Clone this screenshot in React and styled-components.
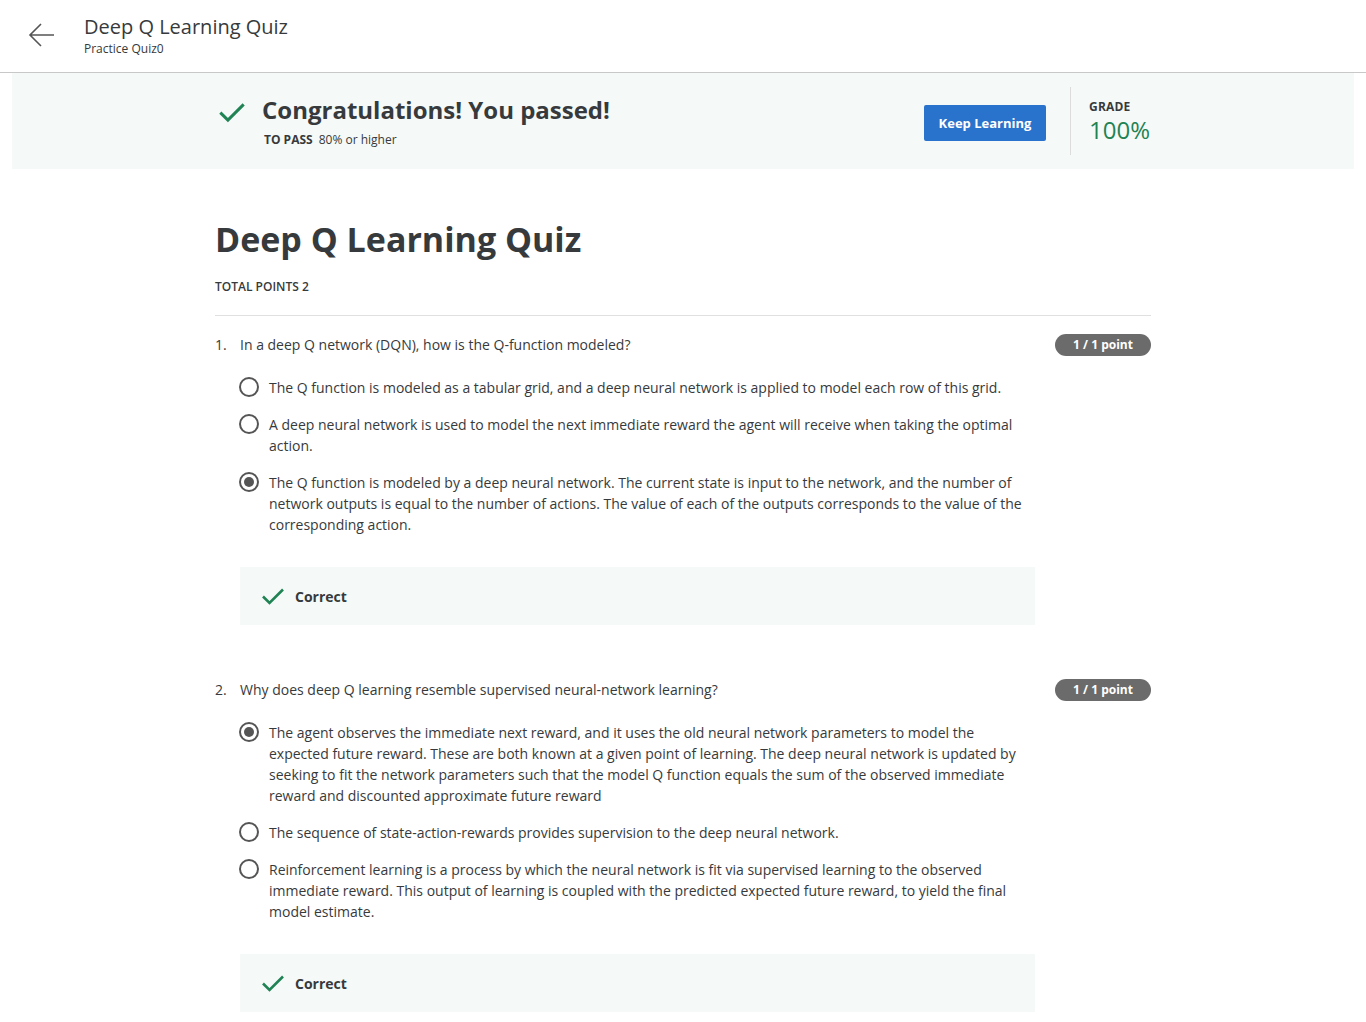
import React from 'react';
import styled, { createGlobalStyle } from 'styled-components';

const GlobalStyle = createGlobalStyle`
  body {
    margin: 0;
    background: #fff;
    font-family: "Open Sans", "Liberation Sans", sans-serif;
    color: #373a3c;
  }
`;

const Header = styled.header`
  height: 73px;
  border-bottom: 1px solid #c8c8c8;
  display: flex;
  align-items: center;
  box-sizing: border-box;
  padding-left: 28px;
`;

const BackButton = styled.button`
  border: none;
  background: none;
  padding: 0;
  width: 28px;
  height: 28px;
  display: flex;
  align-items: center;
  justify-content: center;
  margin-right: 28px;
  margin-top: -2px;
  cursor: pointer;
`;

const HeaderTitles = styled.div`
  display: flex;
  flex-direction: column;
  margin-top: -4px;
`;

const HeaderTitle = styled.h1`
  margin: 0;
  font-size: 20px;
  font-weight: 400;
  line-height: 28px;
  color: #373a3c;
`;

const HeaderSub = styled.span`
  font-size: 12px;
  line-height: 14px;
  margin-top: 1px;
  color: #373a3c;
`;

const Banner = styled.section`
  margin: 0 12px;
  background: #f5f9f8;
  height: 96px;
  display: flex;
  justify-content: center;
`;

const BannerInner = styled.div`
  width: 936px;
  display: flex;
  align-items: center;
  padding-top: 3px;
  box-sizing: border-box;
`;

const PassBlock = styled.div`
  flex: 1;
  display: flex;
  align-items: flex-start;
  gap: 16px;
  padding-left: 3px;
  margin-top: -2px;
`;

const CheckWrap = styled.div`
  margin-top: 4px;
`;

const PassTexts = styled.div`
  display: flex;
  flex-direction: column;
`;

const PassTitle = styled.h2`
  margin: 0;
  font-size: 24px;
  font-weight: 700;
  line-height: 32px;
  color: #373a3c;
`;

const PassMeta = styled.div`
  font-size: 12px;
  line-height: 18px;
  margin-top: 5px;
  padding-left: 2px;
  b {
    font-weight: 700;
    margin-right: 6px;
  }
`;

const KeepButton = styled.button`
  width: 122px;
  height: 36px;
  border: none;
  border-radius: 2px;
  background: #2a73cc;
  color: #fff;
  font-family: inherit;
  font-size: 13px;
  font-weight: 700;
  cursor: pointer;
`;

const Divider = styled.div`
  width: 1px;
  height: 68px;
  background: #dcdcdc;
  margin: -3px 18px 0 24px;
`;

const Grade = styled.div`
  width: 62px;
  display: flex;
  flex-direction: column;
  margin-top: -2px;
`;

const GradeLabel = styled.span`
  font-size: 12px;
  font-weight: 700;
  line-height: 16px;
  letter-spacing: 0.2px;
`;

const GradeValue = styled.span`
  font-size: 24px;
  line-height: 30px;
  color: #1f8354;
`;

const Main = styled.main`
  width: 936px;
  margin: 0 auto;
  padding-top: 46px;
`;

const QuizTitle = styled.h1`
  margin: 0;
  font-size: 34px;
  font-weight: 700;
  line-height: 48px;
  color: #373a3c;
`;

const TotalPoints = styled.div`
  font-size: 12px;
  font-weight: 600;
  line-height: 16px;
  margin-top: 16px;
  padding-bottom: 20px;
  border-bottom: 1px solid #e0e0e0;
`;

const Question = styled.div`
  padding-top: ${p => (p.$first ? '18px' : '54px')};
`;

const QuestionHead = styled.div`
  display: flex;
  align-items: flex-start;
  font-size: 14px;
  line-height: 22px;
`;

const QNum = styled.span`
  width: 25px;
  flex-shrink: 0;
`;

const QText = styled.span`
  flex: 1;
`;

const Badge = styled.span`
  background: #6b6b6b;
  color: #fff;
  font-size: 12px;
  font-weight: 700;
  height: 22px;
  line-height: 22px;
  width: 96px;
  text-align: center;
  border-radius: 11px;
`;

const Options = styled.div`
  width: 795px;
  margin-left: 24px;
  margin-top: 21px;
  display: flex;
  flex-direction: column;
  gap: 16px;
`;

const Option = styled.label`
  display: flex;
  align-items: flex-start;
  font-size: 14px;
  line-height: 21px;
  color: #373a3c;
`;

const Radio = styled.span`
  width: 20px;
  height: 20px;
  box-sizing: border-box;
  border: 2px solid #555;
  border-radius: 50%;
  flex-shrink: 0;
  margin-right: 10px;
  display: flex;
  align-items: center;
  justify-content: center;
  &::after {
    content: '';
    width: 10px;
    height: 10px;
    border-radius: 50%;
    background: ${p => (p.$checked ? '#555' : 'transparent')};
  }
`;

const Feedback = styled.div`
  width: 795px;
  height: 58px;
  margin-left: 25px;
  margin-top: 32px;
  background: #f5f9f8;
  display: flex;
  align-items: center;
  gap: 10px;
  padding-left: 21px;
  box-sizing: border-box;
  font-size: 14px;
  font-weight: 700;
  color: #373a3c;
`;

const Check = ({ size = 24 }) => (
  <svg width={size} height={size} viewBox="0 0 24 24" fill="none">
    <path d="M2 12.5 L8.5 19 L22 5.5" stroke="#1f8354" strokeWidth="2.6" />
  </svg>
);

const quiz = [
  {
    q: 'In a deep Q network (DQN), how is the Q-function modeled?',
    options: [
      'The Q function is modeled as a tabular grid, and a deep neural network is applied to model each row of this grid.',
      'A deep neural network is used to model the next immediate reward the agent will receive when taking the optimal action.',
      'The Q function is modeled by a deep neural network. The current state is input to the network, and the number of network outputs is equal to the number of actions. The value of each of the outputs corresponds to the value of the corresponding action.',
    ],
    picked: 2,
  },
  {
    q: 'Why does deep Q learning resemble supervised neural-network learning?',
    options: [
      'The agent observes the immediate next reward, and it uses the old neural network parameters to model the expected future reward. These are both known at a given point of learning. The deep neural network is updated by seeking to fit the network parameters such that the model Q function equals the sum of the observed immediate reward and discounted approximate future reward',
      'The sequence of state-action-rewards provides supervision to the deep neural network.',
      'Reinforcement learning is a process by which the neural network is fit via supervised learning to the observed immediate reward. This output of learning is coupled with the predicted expected future reward, to yield the final model estimate.',
    ],
    picked: 0,
  },
];

export default function App() {
  return (
    <>
      <GlobalStyle />
      <Header>
        <BackButton aria-label="Back">
          <svg width="28" height="26" viewBox="0 0 28 26" fill="none">
            <path d="M26 13 H3 M13 2 L2 13 L13 24" stroke="#555" strokeWidth="1.6" />
          </svg>
        </BackButton>
        <HeaderTitles>
          <HeaderTitle>Deep Q Learning Quiz</HeaderTitle>
          <HeaderSub>Practice Quiz0</HeaderSub>
        </HeaderTitles>
      </Header>
      <Banner>
        <BannerInner>
          <PassBlock>
            <CheckWrap>
              <Check size={28} />
            </CheckWrap>
            <PassTexts>
              <PassTitle>Congratulations! You passed!</PassTitle>
              <PassMeta>
                <b>TO PASS</b>80% or higher
              </PassMeta>
            </PassTexts>
          </PassBlock>
          <KeepButton>Keep Learning</KeepButton>
          <Divider />
          <Grade>
            <GradeLabel>GRADE</GradeLabel>
            <GradeValue>100%</GradeValue>
          </Grade>
        </BannerInner>
      </Banner>
      <Main>
        <QuizTitle>Deep Q Learning Quiz</QuizTitle>
        <TotalPoints>TOTAL POINTS 2</TotalPoints>
        {quiz.map((item, i) => (
          <Question key={i} $first={i === 0}>
            <QuestionHead>
              <QNum>{i + 1}.</QNum>
              <QText>{item.q}</QText>
              <Badge>1 / 1 point</Badge>
            </QuestionHead>
            <Options>
              {item.options.map((o, j) => (
                <Option key={j}>
                  <Radio $checked={item.picked === j} />
                  <span>{o}</span>
                </Option>
              ))}
            </Options>
            <Feedback>
              <Check size={24} />
              Correct
            </Feedback>
          </Question>
        ))}
      </Main>
    </>
  );
}
